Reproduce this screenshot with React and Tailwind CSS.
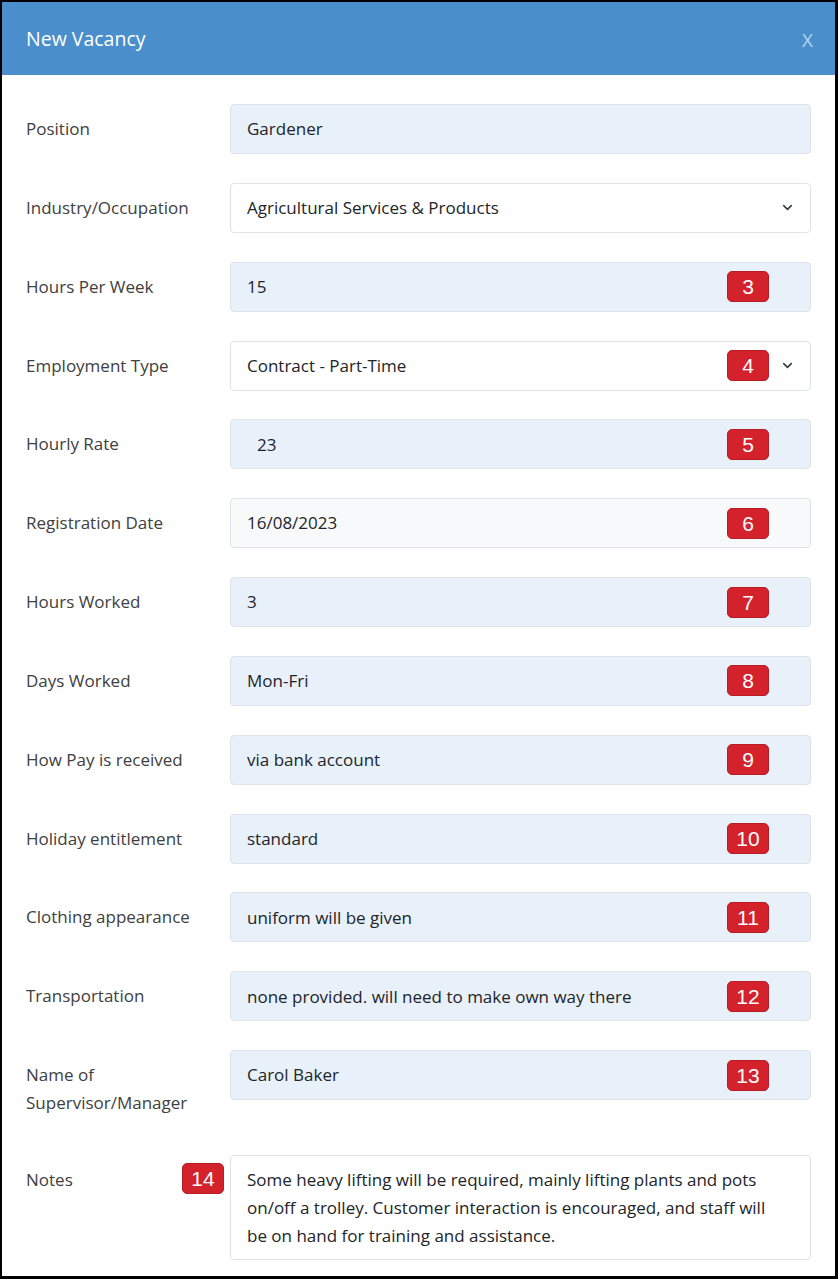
import { ChevronDown } from "lucide-react";

const fields = [
  { label: "Position", value: "Gardener", tone: "fill" },
  { label: "Industry/Occupation", value: "Agricultural Services & Products", tone: "select" },
  { label: "Hours Per Week", value: "15", tone: "fill", badge: 3 },
  { label: "Employment Type", value: "Contract - Part-Time", tone: "select", badge: 4 },
  { label: "Hourly Rate", value: "23", tone: "fill", badge: 5, indent: true },
  { label: "Registration Date", value: "16/08/2023", tone: "muted", badge: 6 },
  { label: "Hours Worked", value: "3", tone: "fill", badge: 7 },
  { label: "Days Worked", value: "Mon-Fri", tone: "fill", badge: 8 },
  { label: "How Pay is received", value: "via bank account", tone: "fill", badge: 9 },
  { label: "Holiday entitlement", value: "standard", tone: "fill", badge: 10 },
  { label: "Clothing appearance", value: "uniform will be given", tone: "fill", badge: 11 },
  { label: "Transportation", value: "none provided. will need to make own way there", tone: "fill", badge: 12 },
  { label: ["Name of", "Supervisor/Manager"], value: "Carol Baker", tone: "fill", badge: 13 },
];

const toneClass = {
  fill: "bg-[#e8f0fa]",
  select: "bg-white",
  muted: "bg-[#f8f9fb]",
};

const Badge = ({ n }) => (
  <span
    className="flex h-[31px] w-[42px] items-center justify-center rounded-[5px] border border-[#b81c24] bg-[#d3222b] text-[21px] leading-none text-white"
    style={{ fontFamily: '"Liberation Sans", Arial, sans-serif' }}
  >
    {n}
  </span>
);

const Field = ({ label, value, tone, badge, indent }) => (
  <div className="flex items-start">
    <label className="w-[228px] shrink-0 pl-[24px] pr-4 pt-[11px] text-[17px] leading-[28px] text-[#404040]">
      {Array.isArray(label) ? (
        <>
          {label[0]}
          <br />
          {label[1]}
        </>
      ) : (
        label
      )}
    </label>
    <div
      className={`flex h-[50px] flex-1 items-center rounded-[4px] border border-[#dfe3e8] pr-[41px] text-[17px] text-[#212529] ${toneClass[tone]} ${
        indent ? "pl-[26px]" : "pl-4"
      }`}
    >
      <span className="flex-1 truncate">{value}</span>
      {badge && <Badge n={badge} />}
      {tone === "select" && (
        <ChevronDown size={15} strokeWidth={2.5} className="-mr-[26px] ml-[11px] text-[#343a40]" />
      )}
    </div>
  </div>
);

export default function App() {
  return (
    <div
      className="flex h-[1279px] w-[838px] flex-col border-b-[3px] border-l-2 border-r-[3px] border-t-2 border-black bg-white"
      style={{ fontFamily: '"Open Sans", "Noto Sans", sans-serif' }}
    >
      <div className="flex h-[73px] shrink-0 items-center justify-between bg-[#4a8fcb] pl-[24px] pr-[22px]">
        <h1 className="text-[19.5px] text-white">New Vacancy</h1>
        <button className="pt-1 text-[19px] text-[#b7d4ef]">X</button>
      </div>

      <div className="flex flex-col gap-[28.85px] pr-[24px] pt-[29px]">
        {fields.map((f) => (
          <Field key={f.value} {...f} />
        ))}

        <div className="mt-[9px] flex items-start">
          <div className="flex w-[228px] shrink-0 items-start justify-between pl-[24px] pr-[6px] pt-[11px]">
            <span className="text-[17px] leading-[28px] text-[#404040]">Notes</span>
            <div className="-mt-[3px]">
              <Badge n={14} />
            </div>
          </div>
          <div className="flex-1 rounded-[4px] border border-[#dfe3e8] bg-white pb-[9px] pl-4 pr-6 pt-[10px] text-[17px] leading-[28px] text-[#212529]">
            Some heavy lifting will be required, mainly lifting plants and pots on/off a trolley. Customer interaction is
            encouraged, and staff will be on hand for training and assistance.
          </div>
        </div>
      </div>
    </div>
  );
}
